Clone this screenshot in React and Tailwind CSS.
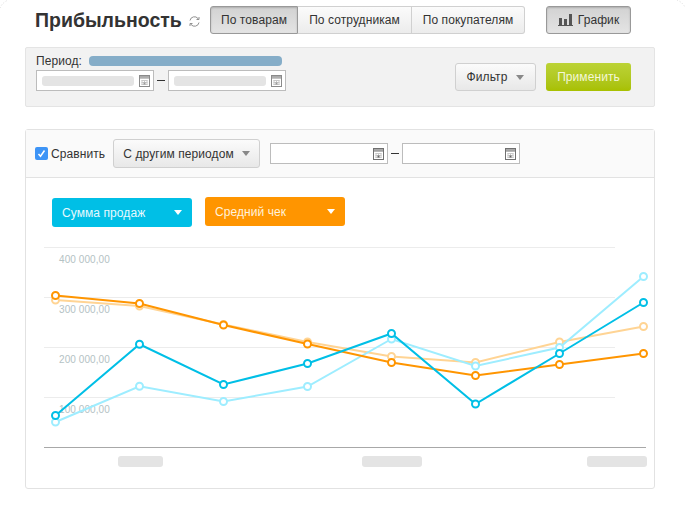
const font = { fontFamily: '"Liberation Sans", Arial, sans-serif' };

function Cal({ dark }) {
  const c = dark ? "#707070" : "#8a8a8a";
  return (
    <svg width="11" height="12" viewBox="0 0 11 12" className="shrink-0">
      <rect x="0.5" y="0.5" width="10" height="11" fill="#fff" stroke={c} />
      <rect x="1" y="1" width="9" height="1.500" fill="#aaa" />
      <rect x="1" y="2.500" width="9" height="1" fill={c} />
      <path d="M2.500 5.500h6M2.500 7.500h6M2.500 9.500h6M3 5v5M5.500 5v5M8 5v5" stroke="#c8c8c8" strokeWidth="1" fill="none" />
      <rect x="4.500" y="7.500" width="2" height="2" fill={dark ? "#666" : "#999"} />
    </svg>
  );
}

function DateInput({ filled }) {
  return (
    <div className="flex h-[21px] w-[118px] items-center justify-between border border-[#bcbcbc] bg-white pl-[5px] pr-[3px]">
      {filled ? <div className="h-[10px] w-[92px] rounded-[3px] bg-[#e4e4e4]" /> : <div />}
      <Cal dark={!filled} />
    </div>
  );
}

function DateRange({ filled }) {
  return (
    <div className="flex items-center">
      <DateInput filled={filled} />
      <div className="mx-[3px] h-[1px] w-[8px] bg-[#333]" />
      <DateInput filled={filled} />
    </div>
  );
}

function Caret({ color = "#888" }) {
  return <div className="h-0 w-0 border-x-[4.5px] border-t-[5px] border-x-transparent" style={{ borderTopColor: color }} />;
}

const series = [
  { c: "#ffd494", ys: [300, 306, 324.5, 342, 356.5, 362.5, 342, 326.5] },
  { c: "#9eedff", ys: [422, 386.3, 401.5, 386.5, 339, 366, 347.5, 276.5] },
  { c: "#ff9500", ys: [295.5, 303.5, 325, 344, 362.5, 375.5, 364.5, 353.5] },
  { c: "#00bfe6", ys: [415.5, 344.3, 384.5, 363.5, 333.5, 404, 353.5, 302.5] },
];
const xs = [55.5, 139.5, 223.5, 307.5, 391.5, 475.5, 559.5, 643.5];

function Chart() {
  // svg origin sits at page (26, 238)
  return (
    <svg width="628" height="230" viewBox="26 238 628 230" className="block" style={font}>
      {[247.5, 297.5, 347.5, 397.5].map((y) => (
        <line key={y} x1="44" x2="615" y1={y} y2={y} stroke="#ececec" />
      ))}
      <line x1="44" x2="646" y1="447.5" y2="447.5" stroke="#a8a8a8" />
      {["400 000,00", "300 000,00", "200 000,00", "100 000,00"].map((t, i) => (
        <text key={t} x="59" y={263 + i * 50} fontSize="10" fill="#b4c2c4">{t}</text>
      ))}
      {series.map((s) => (
        <g key={s.c}>
          <polyline points={s.ys.map((y, i) => `${xs[i]},${y}`).join(" ")} fill="none" stroke={s.c} strokeWidth="2" />
          {s.ys.map((y, i) => (
            <circle key={i} cx={xs[i]} cy={y} r="3.5" fill="#fff" stroke={s.c} strokeWidth="2" />
          ))}
        </g>
      ))}
      <rect x="118" y="456" width="45" height="11" rx="3" fill="#e4e4e4" />
      <rect x="362" y="456" width="60" height="11" rx="3" fill="#e4e4e4" />
      <rect x="587" y="456" width="60" height="11" rx="3" fill="#e4e4e4" />
    </svg>
  );
}

const activeBtn = "border border-[#999] bg-linear-to-b from-[#d2d2d2] to-[#e4e4e4] shadow-[inset_0_1px_2px_rgba(0,0,0,0.18)]";

export default function App() {
  return (
    <div className="relative h-[511px] w-[685px] overflow-hidden bg-white pl-[25px] pt-[6px] text-[#333] tracking-[0.08px]" style={font}>
      {/* faint window corners */}
      <svg width="685" height="16" viewBox="0 0 685 16" className="pointer-events-none absolute left-0 top-0" fill="none" stroke="#d8d8d8" strokeDasharray="1 2">
        <path d="M0 8Q2 3 8 0M677 0Q682 2 685 7" />
      </svg>
      {/* header */}
      <div className="flex h-[28px] items-center pl-[10px]">
        <h1 className="w-[146px] whitespace-nowrap text-[19.5px] font-bold leading-[28px] tracking-normal text-[#333]">Прибыльность</h1>
        <svg width="11" height="11" viewBox="0 0 11 11" className="ml-[8px] mt-[2px]" fill="none" stroke="#909090" strokeWidth="1">
          <path d="M1 4.500a4.500 4.500 0 0 1 8-2l0.500 1M10 6.500a4.500 4.500 0 0 1-8 2l-0.500-1" />
          <path d="M10 1v2.500H7.500M1 10V7.500h2.500" />
        </svg>
        <div className="ml-[10px] flex h-[28px] w-[315px] text-[12px]">
          <div className={`flex w-[88px] items-center justify-center rounded-l-[3px] ${activeBtn}`}>По товарам</div>
          <div className="flex w-[114px] items-center justify-center border-y border-r border-[#d0d0d0] bg-linear-to-b from-[#fbfbfb] to-[#ececec]">По сотрудникам</div>
          <div className="flex w-[113px] items-center justify-center rounded-r-[3px] border-y border-r border-[#d0d0d0] bg-linear-to-b from-[#fbfbfb] to-[#ececec]">По покупателям</div>
        </div>
        <div className={`ml-[21px] flex h-[28px] w-[85px] items-center justify-center gap-[5px] rounded-[3px] text-[12px] ${activeBtn}`}>
          <svg width="15" height="12" viewBox="0 0 15 12" fill="#555">
            <rect x="1" y="4" width="3" height="7" />
            <rect x="6" y="5" width="3" height="6" />
            <rect x="11" y="0" width="3" height="11" />
            <rect x="0" y="11" width="15" height="1" />
          </svg>
          График
        </div>
      </div>

      {/* filter panel */}
      <div className="mt-[13px] flex h-[60px] w-[630px] justify-between rounded-[2px] border border-[#e4e4e4] bg-[#f2f2f2] pl-[10px] pr-[23px]">
        <div className="pt-[6px]">
          <div className="flex h-[14px] items-center text-[12px]">
            <span>Период:</span>
            <div className="ml-[7px] h-[10px] w-[193px] rounded-[4px] bg-[#85adc8]" />
          </div>
          <div className="mt-[2px]">
            <DateRange filled />
          </div>
        </div>
        <div className="flex items-start gap-[10px] pt-[15px] text-[12px]">
          <div className="flex h-[28px] w-[81px] items-center justify-center gap-[9px] rounded-[3px] border border-[#d0d0d0] bg-linear-to-b from-[#fbfbfb] to-[#e8e8e8]">
            Фильтр <Caret />
          </div>
          <div className="flex h-[28px] w-[85px] items-center justify-center rounded-[3px] bg-linear-to-b from-[#bcd335] to-[#a8c000] text-[#f4f7d8]">Применить</div>
        </div>
      </div>

      {/* compare panel */}
      <div className="mt-[22px] h-[360px] w-[630px] rounded-[3px] border border-[#e2e2e2] bg-white">
        <div className="flex h-[48px] items-center border-b border-[#e2e2e2] bg-[#fafafa] pl-[9px] text-[12px]">
          <div className="flex h-[13px] w-[13px] items-center justify-center rounded-[2px] bg-[#3d94f6]">
            <svg width="9" height="9" viewBox="0 0 9 9" fill="none" stroke="#fff" strokeWidth="1.500">
              <path d="M1.500 5l2 2.200 4-5.700" />
            </svg>
          </div>
          <span className="ml-[3px] w-[55px]">Сравнить</span>
          <div className="ml-[7px] flex h-[29px] w-[147px] items-center justify-center gap-[8px] rounded-[3px] border border-[#d0d0d0] bg-linear-to-b from-[#fbfbfb] to-[#e8e8e8]">
            С другим периодом <Caret />
          </div>
          <div className="ml-[10px]">
            <DateRange />
          </div>
        </div>
        <div className="flex items-start gap-[13px] pl-[26px] pt-[19px] text-[12px] text-[#e6f9fe]">
          <div className="mt-[1px] flex h-[29px] w-[140px] items-center justify-between rounded-[3px] bg-[#00bfe6] pl-[10px] pr-[10px]">
            Сумма продаж <Caret color="#fff" />
          </div>
          <div className="flex h-[29px] w-[140px] items-center justify-between rounded-[3px] bg-[#ff9500] pl-[10px] pr-[10px] text-[#fff2dc]">
            Средний чек <Caret color="#fff" />
          </div>
        </div>
        <div className="mt-[11px]">
          <Chart />
        </div>
      </div>
    </div>
  );
}
